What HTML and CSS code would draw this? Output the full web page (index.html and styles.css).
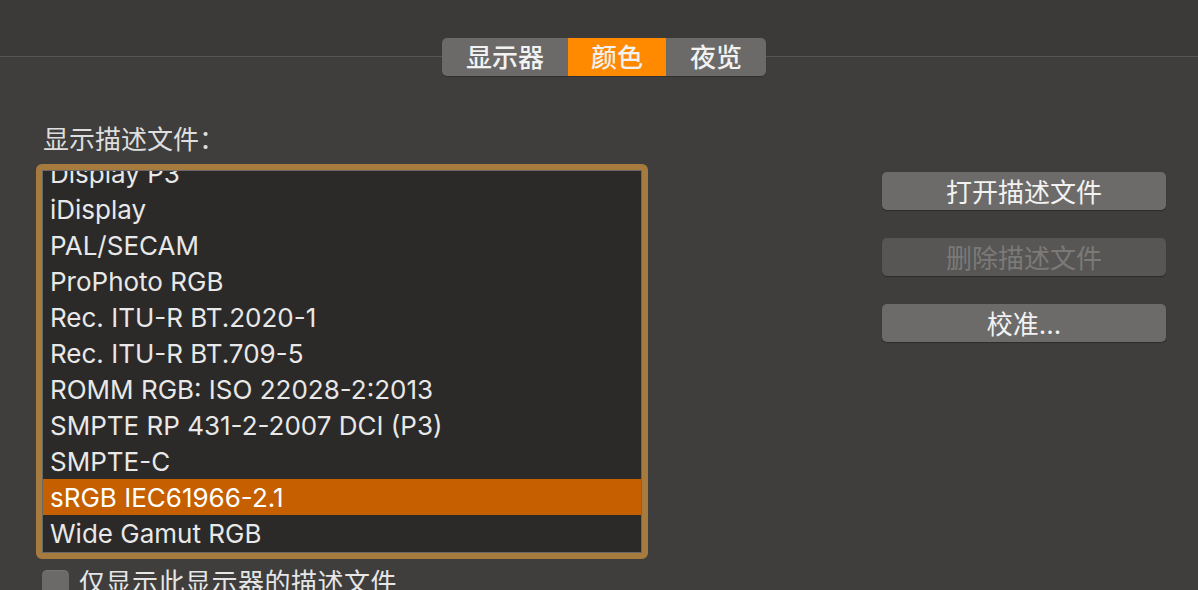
FILE: index.html
```html
<!DOCTYPE html>
<html lang="zh-CN">
<head>
    <meta charset="UTF-8">
    <meta name="viewport" content="width=device-width, initial-scale=1.0">
    <title>颜色</title>
    <link rel="stylesheet" href="styles.css">
</head>
<body>

    <div class="tabs-bar"></div>
    <div class="tabs">
        <div class="tab tab-display">显示器</div>
        <div class="tab tab-color active">颜色</div>
        <div class="tab tab-night">夜览</div>
    </div>

    <div class="content">
        <div class="profiles">
            <div class="profiles-label">显示描述文件：</div>
            <div class="listbox">
                <div class="list-inner">
                    <ul class="list">
                        <li>Display P3</li>
                        <li>iDisplay</li>
                        <li>PAL/SECAM</li>
                        <li>ProPhoto RGB</li>
                        <li>Rec. ITU-R BT.2020-1</li>
                        <li>Rec. ITU-R BT.709-5</li>
                        <li>ROMM RGB: ISO 22028-2:2013</li>
                        <li>SMPTE RP 431-2-2007 DCI (P3)</li>
                        <li>SMPTE-C</li>
                        <li class="selected">sRGB IEC61966-2.1</li>
                        <li>Wide Gamut RGB</li>
                    </ul>
                </div>
            </div>
            <label class="only-this">
                <span class="checkbox"></span>
                <span>仅显示此显示器的描述文件</span>
            </label>
        </div>

        <div class="actions">
            <button type="button">打开描述文件</button>
            <button type="button" disabled>删除描述文件</button>
            <button type="button">校准...</button>
        </div>
    </div>

</body>
</html>
```

FILE: styles.css
```css
body {
    margin: 0;
    height: 590px;
    overflow: hidden;
    background-color: #3f3e3c;
    color: #e6e6e6;
    font-family: Inter, "Noto Sans CJK SC", sans-serif;
}
.tabs-bar {
    height: 56px;
    background-color: #3b3a38;
    border-bottom: 1px solid #575553;
}
.tabs {
    display: flex;
    width: 324px;
    height: 38px;
    margin: -19px auto 0;
    position: relative;
    left: 5px;
    border-radius: 5px;
    overflow: hidden;
    background-color: #6b6a68;
    box-shadow: 0 1px 1px rgba(0, 0, 0, 0.25);
}
.tab {
    display: flex;
    align-items: center;
    justify-content: center;
    padding-bottom: 3px;
    font-size: 26px;
    font-weight: 500;
    color: #f2f2f2;
}
.tab-display { width: 126px; }
.tab-color { width: 98px; }
.tab-night { width: 100px; }
.tab.active {
    background-color: #ff8a00;
}
.content {
    display: flex;
    padding: 0 32px 0 36px;
    margin-top: 48px;
}
.profiles {
    width: 612px;
}
.profiles-label {
    height: 32px;
    line-height: 32px;
    margin-bottom: 8px;
    padding-left: 7px;
    font-size: 26px;
    color: #dedede;
}
.listbox {
    border: 6px solid #a77b3d;
    border-radius: 6px;
}
.list-inner {
    height: 381px;
    overflow: hidden;
    border: 1px solid #6a6866;
    background-color: #2b2a29;
}
.list {
    list-style: none;
    margin: -16px 0 0;
    padding: 0;
}
.list li {
    height: 36px;
    line-height: 38px;
    padding-left: 7px;
    font-size: 26px;
    color: #e8e8e8;
    white-space: nowrap;
}
.list li.selected {
    background-color: #c55f00;
    color: #ffffff;
}
.only-this {
    display: flex;
    align-items: flex-start;
    gap: 10px;
    margin-top: 9px;
    padding-left: 6px;
    font-size: 26px;
    line-height: 30px;
    letter-spacing: 0.5px;
    color: #e6e6e6;
}
.checkbox {
    width: 27px;
    height: 26px;
    margin-top: 2px;
    border-radius: 5px;
    background-color: #6b6a68;
    box-shadow: inset 0 1px 0 rgba(255, 255, 255, 0.08);
}
.actions {
    display: flex;
    flex-direction: column;
    gap: 28px;
    width: 284px;
    margin-left: auto;
    padding-top: 48px;
}
button {
    height: 38px;
    padding: 0 0 3px;
    border: none;
    border-radius: 5px;
    background-color: #6c6b69;
    color: #f2f2f2;
    font-family: inherit;
    font-size: 26px;
    box-shadow: 0 1px 1px rgba(0, 0, 0, 0.3);
}
button:disabled {
    background-color: #575654;
    color: #7b7a79;
}
```
